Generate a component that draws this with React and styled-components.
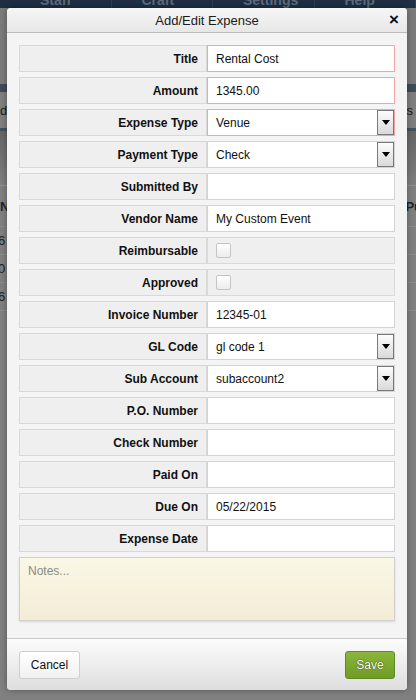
import * as React from "react"
import styled, { createGlobalStyle } from 'styled-components';

const GlobalStyle = createGlobalStyle`
  html, body {
    margin: 0;
    padding: 0;
  }
  body {
    font-family: "Liberation Sans", Arial, sans-serif;
    font-size: 12px;
    color: #111;
  }
`

const fields = [
  { label: 'Title', type: 'text', value: 'Rental Cost', error: true },
  { label: 'Amount', type: 'text', value: '1345.00', error: true },
  { label: 'Expense Type', type: 'select', value: 'Venue', error: true },
  { label: 'Payment Type', type: 'select', value: 'Check' },
  { label: 'Submitted By', type: 'text', value: '' },
  { label: 'Vendor Name', type: 'text', value: 'My Custom Event' },
  { label: 'Reimbursable', type: 'check' },
  { label: 'Approved', type: 'check' },
  { label: 'Invoice Number', type: 'text', value: '12345-01' },
  { label: 'GL Code', type: 'select', value: 'gl code 1' },
  { label: 'Sub Account', type: 'select', value: 'subaccount2' },
  { label: 'P.O. Number', type: 'text', value: '' },
  { label: 'Check Number', type: 'text', value: '' },
  { label: 'Paid On', type: 'text', value: '' },
  { label: 'Due On', type: 'text', value: '05/22/2015' },
  { label: 'Expense Date', type: 'text', value: '' },
]

const Field = ({ field }) => {
  if (field.type === 'check') {
    return (
      <CheckCell>
        <CheckBox />
      </CheckCell>
    )
  }
  if (field.type === 'select') {
    return (
      <InputCell $error={field.error}>
        {field.value}
        <DropButton>
          <svg width="8" height="5" viewBox="0 0 8 5"><path d="M0 0h8L4 5z" fill="#000" /></svg>
        </DropButton>
      </InputCell>
    )
  }
  return <InputCell $error={field.error}>{field.value}</InputCell>
}

const App = () => {
  return (
    <Page>
      <GlobalStyle />
      <Backdrop>
        <NavBar>
          <NavItem>Staff</NavItem>
          <NavItem>Craft</NavItem>
          <NavItem>Settings</NavItem>
          <NavItem>Help</NavItem>
        </NavBar>
        <Spacer $h={76} />
        <SubBar />
        <Toolbar>
          <span>d</span>
          <span>s</span>
        </Toolbar>
        <ToolbarShade />
        <TableHead>
          <span>N</span>
          <span>Pu</span>
        </TableHead>
        <TableRow><span>6</span></TableRow>
        <TableRow><span>0</span></TableRow>
        <TableRow><span>6</span></TableRow>
      </Backdrop>

      <Modal>
        <Header>
          Add/Edit Expense
          <Close>×</Close>
        </Header>
        <Body>
          {fields.map((f) => (
            <Row key={f.label}>
              <LabelCell>{f.label}</LabelCell>
              <Field field={f} />
            </Row>
          ))}
          <Notes>Notes...</Notes>
        </Body>
        <Footer>
          <CancelButton>Cancel</CancelButton>
          <SaveButton>Save</SaveButton>
        </Footer>
      </Modal>
    </Page>
  )
};

const Page = styled.div`
  position: relative;
  width: 416px;
  height: 700px;
  overflow: hidden;
  background: #808080;
`
const Backdrop = styled.div`
  display: flex;
  flex-direction: column;
`
const NavBar = styled.div`
  height: 8px;
  background: #1f2e42;
  display: flex;
  overflow: hidden;
  padding-left: 10px;
`
const NavItem = styled.div`
  width: 95px;
  border-right: 1px solid #2e3f55;
  color: #5d6b7c;
  font-size: 14px;
  font-weight: bold;
  line-height: 0px;
  padding-left: 30px;
`
const Spacer = styled.div`
  height: ${p => p.$h}px;
  background: #7b7b7b;
`
const SubBar = styled.div`
  height: 8px;
  background: #3e4b5a;
`
const Toolbar = styled.div`
  height: 36px;
  background: #7f7f7f;
  display: flex;
  justify-content: space-between;
  align-items: center;
  padding: 0 3px 0 0;
  color: #1a1a1a;
  font-size: 13px;
`
const ToolbarShade = styled.div`
  height: 54px;
  border-top: 3px solid #46515c;
  background: linear-gradient(#666, #777 70%, #808080);
  border-bottom: 1px solid #939393;
`
const TableHead = styled.div`
  height: 40px;
  display: flex;
  justify-content: space-between;
  align-items: center;
  margin-right: -6px;
  font-weight: bold;
  font-size: 13px;
  color: #1c2430;
  border-bottom: 1px solid #8c8c8c;
`
const TableRow = styled.div`
  height: 27px;
  display: flex;
  align-items: center;
  margin-left: -2px;
  font-size: 13px;
  color: #222;
  border-bottom: 1px solid #8c8c8c;
`
const Modal = styled.div`
  position: absolute;
  top: 8px;
  left: 7px;
  width: 400px;
  height: 682px;
  background: #f4f4f4;
  border-radius: 4px;
  box-shadow: 0 0 6px rgba(0, 0, 0, 0.35);
  display: flex;
  flex-direction: column;
  overflow: hidden;
`
const Header = styled.div`
  position: relative;
  height: 24px;
  display: flex;
  align-items: center;
  justify-content: center;
  background: linear-gradient(#f6f6f6, #e7e7e7);
  border-bottom: 1px solid #bcbcbc;
  font-size: 13px;
  color: #1a1a1a;
`
const Close = styled.span`
  position: absolute;
  right: 8px;
  top: 3px;
  font-size: 17px;
  font-weight: bold;
  line-height: 18px;
  color: #111;
`
const Body = styled.div`
  flex: 1;
  padding: 12px 12px 0 12px;
  display: flex;
  flex-direction: column;
  gap: 5px;
`
const Row = styled.div`
  display: grid;
  grid-template-columns: 188px 188px;
  height: 27px;
`
const LabelCell = styled.div`
  box-sizing: border-box;
  background: #efefef;
  border: 1px solid #d9d9d9;
  display: flex;
  align-items: center;
  justify-content: flex-end;
  padding-right: 8px;
  font-weight: bold;
  font-size: 12px;
  color: #111;
`
const InputCell = styled.div`
  position: relative;
  box-sizing: border-box;
  background: #fff;
  border: 1px solid ${p => (p.$error ? '#f3a4a4' : '#d4d4d4')};
  display: flex;
  align-items: center;
  padding-left: 8px;
  font-size: 12px;
  color: #111;
`
const DropButton = styled.div`
  position: absolute;
  top: 0;
  right: 0;
  bottom: 0;
  width: 17px;
  box-sizing: border-box;
  border: 1px solid #7a7a7a;
  background: linear-gradient(#fdfdfd, #d9d9d9);
  display: flex;
  align-items: center;
  justify-content: center;
`
const CheckCell = styled.div`
  box-sizing: border-box;
  background: #efefef;
  border: 1px solid #d9d9d9;
  display: flex;
  align-items: center;
  padding-left: 8px;
`
const CheckBox = styled.div`
  width: 15px;
  height: 15px;
  box-sizing: border-box;
  border: 1px solid #c4c4c4;
  border-radius: 2px;
  background: linear-gradient(#fff, #ececec);
`
const Notes = styled.div`
  box-sizing: border-box;
  height: 64px;
  border: 1px solid #d0d0d0;
  background: linear-gradient(#faf7e6, #f3edd6);
  box-shadow: 0 1px 2px rgba(0, 0, 0, 0.12);
  padding: 6px 8px;
  color: #8a8a84;
  font-size: 12px;
`
const Footer = styled.div`
  height: 52px;
  box-sizing: border-box;
  border-top: 1px solid #c9c9c9;
  background: linear-gradient(#fcfcfc, #dedede);
  display: flex;
  justify-content: space-between;
  align-items: flex-start;
  padding: 12px 12px 0 12px;
`
const CancelButton = styled.div`
  box-sizing: border-box;
  width: 61px;
  height: 28px;
  border: 1px solid #cfcfcf;
  border-radius: 3px;
  background: linear-gradient(#ffffff, #f1f1f1);
  display: flex;
  align-items: center;
  justify-content: center;
  font-size: 12px;
  color: #111;
`
const SaveButton = styled.div`
  box-sizing: border-box;
  width: 50px;
  height: 28px;
  border: 1px solid #5f8a1f;
  border-radius: 3px;
  background: linear-gradient(#8ab63a, #6f9b27);
  display: flex;
  align-items: center;
  justify-content: center;
  font-size: 12px;
  color: #fff;
  text-shadow: 0 0 1px #2f4a0a, 0 0 1px #2f4a0a;
`

export default App;
